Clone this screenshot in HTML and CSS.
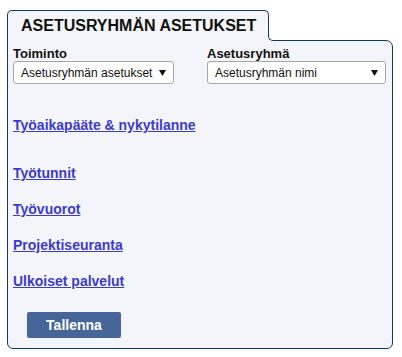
FILE: index.html
```html
<!DOCTYPE html>
<html lang="fi">
<head>
<meta charset="utf-8">
<title>Asetusryhmän asetukset</title>
<link rel="stylesheet" href="styles.css">
</head>
<body>
<div class="frame">
  <div class="tab"><h1 class="tab-title">ASETUSRYHMÄN ASETUKSET</h1></div>
  <div class="panel">
    <div class="fields">
      <div class="field field-left">
        <label class="field-label">Toiminto</label>
        <div class="select">
          <span class="select-text">Asetusryhmän asetukset</span>
          <svg class="select-arrow" width="7" height="6" viewBox="0 0 7 6"><polygon points="0,0 7,0 3.5,6" fill="#111"/></svg>
        </div>
      </div>
      <div class="field field-right">
        <label class="field-label">Asetusryhmä</label>
        <div class="select">
          <span class="select-text">Asetusryhmän nimi</span>
          <svg class="select-arrow" width="7" height="6" viewBox="0 0 7 6"><polygon points="0,0 7,0 3.5,6" fill="#111"/></svg>
        </div>
      </div>
    </div>
    <nav class="links">
      <a class="link link-first" href="#">Työaikapääte &amp; nykytilanne</a>
      <a class="link" href="#">Työtunnit</a>
      <a class="link" href="#">Työvuorot</a>
      <a class="link" href="#">Projektiseuranta</a>
      <a class="link" href="#">Ulkoiset palvelut</a>
    </nav>
    <button class="save" type="button">Tallenna</button>
  </div>
</div>
</body>
</html>
```

FILE: styles.css
```css
html, body {
  margin: 0;
  padding: 0;
  background: #ffffff;
}

body {
  font-family: "Liberation Sans", Arial, sans-serif;
  color: #111111;
}

.frame {
  width: 386px;
  margin: 10px 0 0 7px;
}

.tab {
  position: relative;
  z-index: 1;
  box-sizing: border-box;
  width: 262px;
  height: 31px;
  margin-bottom: -1px;
  padding-left: 13px;
  background: #f4f5fa;
  border: 1px solid #0d3a66;
  border-bottom: none;
  border-radius: 5px 5px 0 0;
}

.tab::before,
.tab::after {
  content: "";
  position: absolute;
  left: 100%;
  bottom: 0;
  width: 6px;
  height: 6px;
  box-sizing: border-box;
}

.tab::before {
  background: #f4f5fa;
}

.tab::after {
  background: #ffffff;
  border-left: 1px solid #0d3a66;
  border-bottom: 1px solid #0d3a66;
  border-bottom-left-radius: 5px;
}

.tab-title {
  margin: 0;
  padding-top: 5px;
  font-size: 16px;
  line-height: 20px;
  font-weight: bold;
  color: #111111;
}

.panel {
  box-sizing: border-box;
  height: 309px;
  padding: 5px 5px 0 5px;
  background: #f4f5fa;
  border: 1px solid #0d3a66;
  border-radius: 0 7px 6px 6px;
}

.fields {
  display: flex;
  gap: 33px;
}

.field {
  display: flex;
  flex-direction: column;
}

.field-left .select {
  width: 161px;
}

.field-right .select {
  width: 179px;
}

.field-label {
  font-size: 13px;
  line-height: 15px;
  font-weight: bold;
  color: #111111;
}

.select {
  box-sizing: border-box;
  height: 23px;
  display: flex;
  align-items: center;
  justify-content: space-between;
  padding: 0 7px 0 7px;
  background: #ffffff;
  border: 1px solid #a6a6a6;
  border-radius: 3px;
}

.select-text {
  font-size: 12px;
  line-height: 14px;
  color: #111111;
  white-space: nowrap;
}

.select-arrow {
  display: block;
  flex: none;
}

.links {
  display: flex;
  flex-direction: column;
  align-items: flex-start;
  gap: 20px;
  margin-top: 33px;
}

.link {
  font-size: 14px;
  line-height: 16px;
  font-weight: bold;
  color: #3b3bcc;
  text-decoration: underline;
}

.link-first {
  margin-bottom: 12px;
}

.save {
  display: block;
  width: 94px;
  height: 26px;
  margin: 23px 0 0 14px;
  padding: 0;
  background: #466598;
  border: none;
  border-radius: 2px;
  font-family: "Liberation Sans", Arial, sans-serif;
  font-size: 14px;
  font-weight: bold;
  color: #ffffff;
}
```
